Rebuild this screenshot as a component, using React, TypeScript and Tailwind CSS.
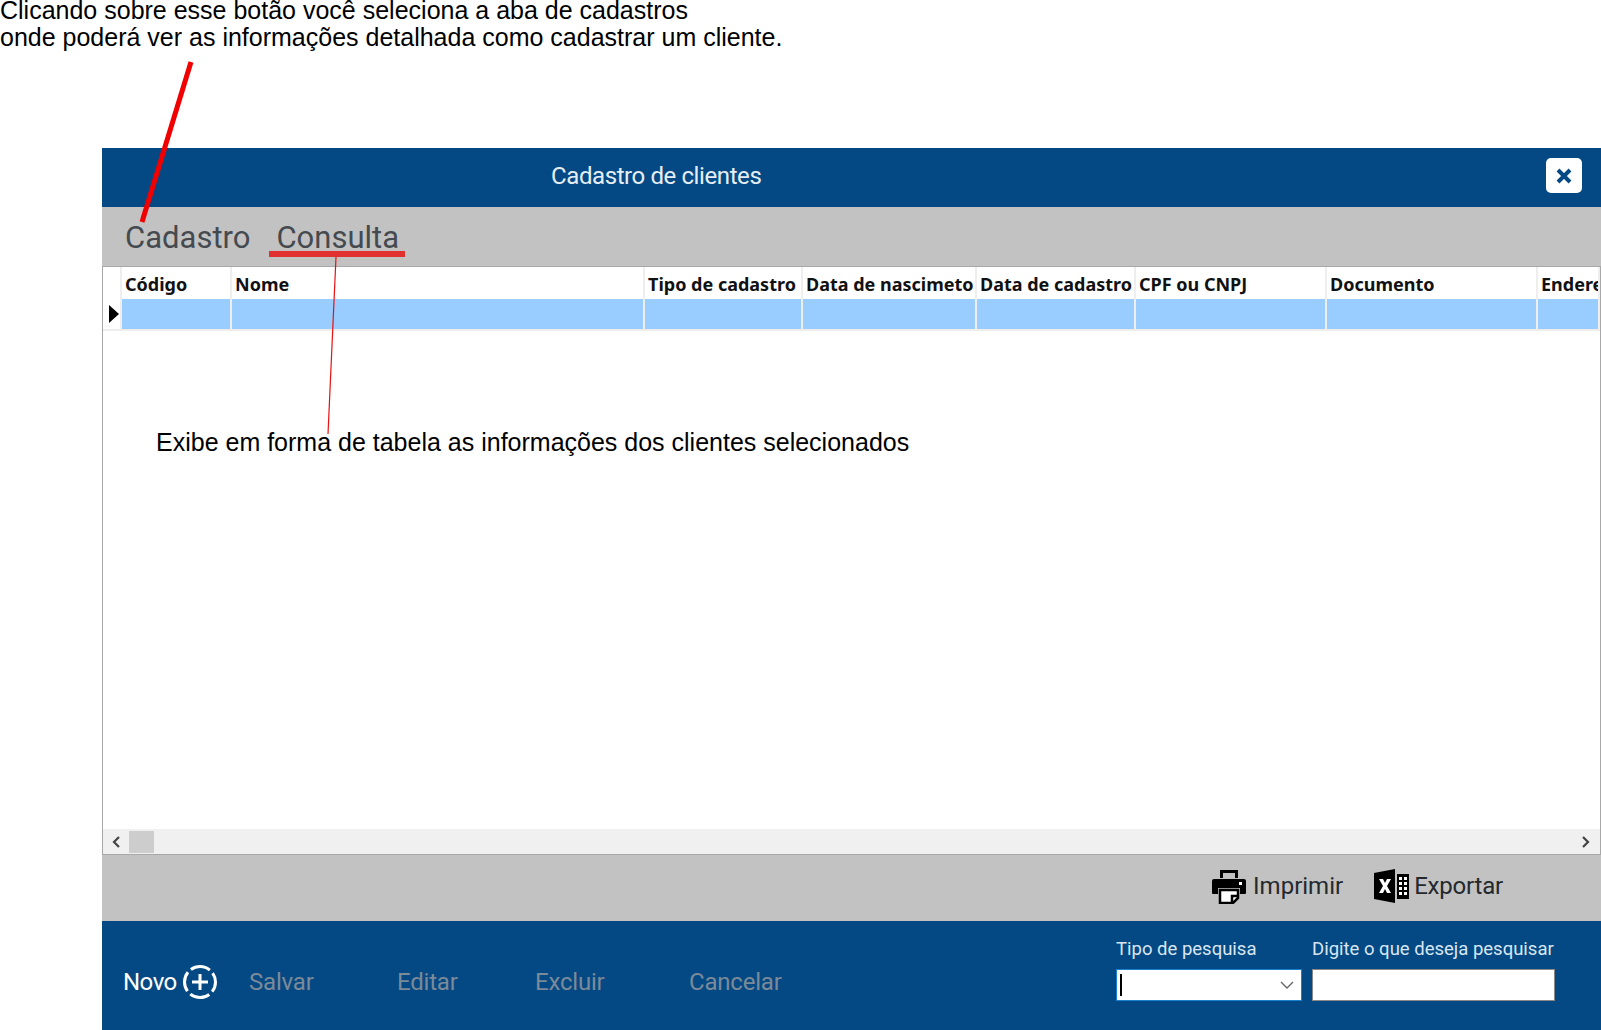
const colunas = [
  "Código",
  "Nome",
  "Tipo de cadastro",
  "Data de nascimeto",
  "Data de cadastro",
  "CPF ou CNPJ",
  "Documento",
  "Endereço",
];

const gridCols = "grid grid-cols-[19px_110px_413px_158px_174px_159px_191px_211px_1fr]";

function IconeNovo() {
  return (
    <svg width="36" height="36" viewBox="0 0 36 36" fill="none" stroke="white" strokeWidth="3">
      <circle cx="18" cy="18" r="15.5" strokeDasharray="20.3 4" strokeDashoffset="10" />
      <path d="M18 10v16M10 18h16" />
    </svg>
  );
}

function IconeImpressora() {
  return (
    <svg width="36" height="36" viewBox="0 0 36 36">
      <path d="M9 2h18v8h-3V5H12v5H9z" fill="#000" />
      <path d="M3 11h30q2 0 2 2v12q0 1-1 1h-5v-6H7v6H2q-1 0-1-1V13q0-2 2-2z" fill="#000" />
      <path d="M9 22h18v8l-5 5H9z" fill="#fff" stroke="#000" strokeWidth="2.5" />
      <path d="M21 34v-6h6" fill="none" stroke="#000" strokeWidth="2.5" />
      <rect x="28" y="14" width="3" height="3" fill="#fff" />
    </svg>
  );
}

function IconeExcel() {
  return (
    <svg width="36" height="36" viewBox="0 0 36 36">
      <path d="M21 1v34L0 31V5z" fill="#000" />
      <path d="M5 11h4l2 4 2-4h4l-4 7 4 7h-4l-2-4-2 4H5l4-7z" fill="#fff" />
      <path d="M23 6h12v25H23z" fill="#000" />
      <path d="M25 9h3v3h-3zM30 9h3v3h-3zM25 14h3v3h-3zM30 14h3v3h-3zM25 19h3v3h-3zM30 19h3v3h-3zM25 24h3v3h-3zM30 24h3v3h-3z" fill="#fff" />
    </svg>
  );
}

export default function App() {
  return (
    <div className="relative h-[1030px] w-[1601px] overflow-hidden bg-white font-['Roboto',sans-serif]">
      <div className="flex h-[148px] flex-col font-['Liberation_Sans',sans-serif] text-[25px] text-black">
        <p className="leading-[20px]">Clicando sobre esse botão você seleciona a aba de cadastros</p>
        <p className="mt-[4px] leading-[27px]">onde poderá ver as informações detalhada como cadastrar um cliente.</p>
      </div>

      <div className="ml-[102px] flex h-[882px] flex-col bg-[#c2c2c2]">
        <div className="flex h-[59px] items-center justify-between bg-[#044983] pb-[4px] pl-[449px] pr-[19px] text-white">
          <span className="text-[24px] tracking-[-0.4px] text-[#e6eef5]">Cadastro de clientes</span>
          <button className="flex h-[35px] w-[36px] items-center justify-center rounded-[5px] bg-white">
            <svg width="16" height="16" viewBox="0 0 16 16" stroke="#044983" strokeWidth="4">
              <path d="M2 2l12 12M14 2L2 14" />
            </svg>
          </button>
        </div>

        <div className="flex h-[59px] items-center pl-[23px] pt-[4px] text-[31px] text-[#454a50]">
          <span>Cadastro</span>
          <span className="ml-[26px]">Consulta</span>
        </div>

        <div className="flex h-[589px] flex-col overflow-hidden border-x border-t border-[#a8a8a8] bg-white">
          <div className={gridCols + " h-[32px] shrink-0 overflow-hidden font-['Noto_Sans',sans-serif] text-[18px] font-bold leading-[34px] text-[#111]"}>
            <div className="border-r-2 border-[#eeeeee]" />
            {colunas.map((c) => (
              <div key={c} className="overflow-hidden whitespace-nowrap border-r-2 border-[#eeeeee] pl-[3px]">
                {c}
              </div>
            ))}
          </div>
          <div className={gridCols + " h-[32px] shrink-0 border-b-2 border-[#eeeeee]"}>
            <div className="flex items-center justify-center border-r-2 border-[#eeeeee]">
              <span className="ml-[4px] h-0 w-0 border-y-[9px] border-l-[10px] border-y-transparent border-l-black" />
            </div>
            {colunas.map((c) => (
              <div key={c} className="border-r-2 border-[#eeeeee] bg-[#99ccff]" />
            ))}
          </div>
          <div className="flex-1" />
          <div className="flex h-[26px] shrink-0 items-center justify-between border-b border-[#a8a8a8] bg-[#f0f0f0] text-[#333]">
            <div className="flex h-full items-center">
              <svg className="ml-[9px]" width="9" height="12" viewBox="0 0 9 12" fill="none" stroke="#444" strokeWidth="2.2">
                <path d="M7 1L2 6l5 5" />
              </svg>
              <div className="ml-[8px] h-[22px] w-[25px] bg-[#cdcdcd]" />
            </div>
            <svg className="mr-[10px]" width="9" height="12" viewBox="0 0 9 12" fill="none" stroke="#444" strokeWidth="2.2">
              <path d="M2 1l5 5-5 5" />
            </svg>
          </div>
        </div>

        <div className="flex h-[66px] items-center justify-end pb-[4px] pr-[98px] text-[24px] text-[#24292e]">
          <div className="flex items-center gap-[6px]">
            <IconeImpressora />
            <span>Imprimir</span>
          </div>
          <div className="ml-[31px] flex items-center gap-[4px]">
            <IconeExcel />
            <span className="tracking-[-0.2px]">Exportar</span>
          </div>
        </div>

        <div className="flex h-[109px] items-start bg-[#044983] text-[24px]">
          <div className="mt-[43px] flex w-[147px] items-center pl-[21px] text-white">
            <span className="tracking-[-0.5px]">Novo</span>
            <span className="ml-[5px]">
              <IconeNovo />
            </span>
          </div>
          <div className="mt-[43px] flex h-[36px] items-center tracking-[-0.2px] text-[#7b8a99]">
            <span className="w-[148px]">Salvar</span>
            <span className="w-[138px]">Editar</span>
            <span className="w-[154px]">Excluir</span>
            <span>Cancelar</span>
          </div>
          <div className="ml-auto mr-[46px] mt-[18px] flex gap-[10px] text-[#d9e6f2]">
            <div className="flex w-[186px] flex-col">
              <label className="mb-[9px] text-[18.5px] leading-[21px]">Tipo de pesquisa</label>
              <div className="flex h-[32px] items-center justify-between border border-[#1b7fd0] bg-white pl-[3px] pr-[7px]">
                <span className="h-[22px] w-[2px] bg-black" />
                <svg width="14" height="8" viewBox="0 0 14 8" fill="none" stroke="#666" strokeWidth="1.4">
                  <path d="M1 1l6 6 6-6" />
                </svg>
              </div>
            </div>
            <div className="flex w-[243px] flex-col">
              <label className="mb-[9px] whitespace-nowrap text-[18.5px] leading-[21px]">Digite o que deseja pesquisar</label>
              <div className="h-[32px] border border-[#888] bg-white" />
            </div>
          </div>
        </div>
      </div>

      {/* anotacoes em cima do print */}
      <svg className="pointer-events-none absolute left-0 top-0" width="1601" height="1030">
        <path d="M191 62L142 222" stroke="#f00000" strokeWidth="5" />
        <path d="M336 257L328 434" stroke="#e81010" strokeWidth="1.2" />
      </svg>
      <div className="absolute left-[269px] top-[251px] h-[6px] w-[136px] bg-[#e03030]" />
      <p className="absolute left-[156px] top-[428px] whitespace-nowrap font-['Liberation_Sans',sans-serif] text-[25px] leading-[28px] text-black">
        Exibe em forma de tabela as informações dos clientes selecionados
      </p>
    </div>
  );
}
